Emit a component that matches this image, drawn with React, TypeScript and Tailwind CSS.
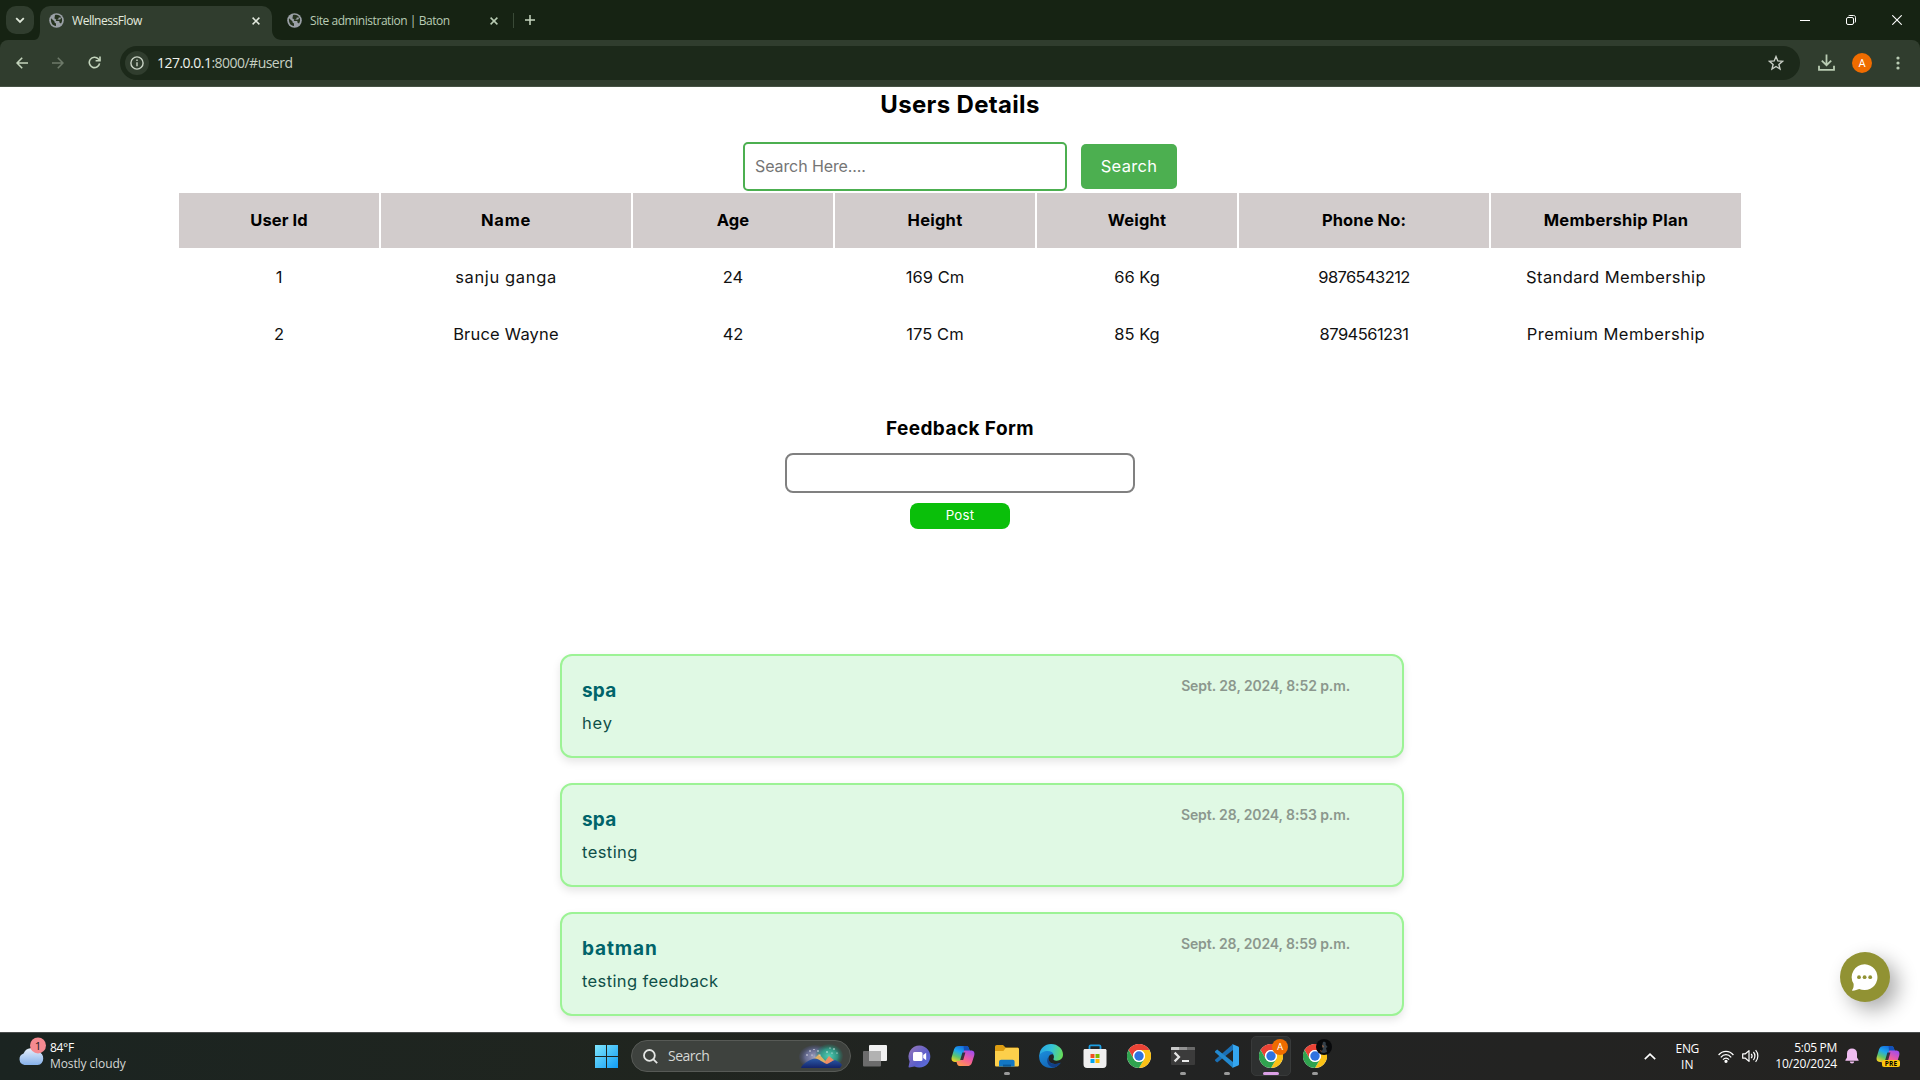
import React from "react";

type Cell = { text: string; cls: string };

const headers: Cell[] = [
  { text: "User Id", cls: "tracking-[0.1px]" },
  { text: "Name", cls: "tracking-[0.8px]" },
  { text: "Age", cls: "tracking-[0.1px]" },
  { text: "Height", cls: "tracking-[0.25px]" },
  { text: "Weight", cls: "tracking-[0.2px]" },
  { text: "Phone No:", cls: "tracking-[0.1px]" },
  { text: "Membership Plan", cls: "tracking-[0.28px]" },
];

const rows: Cell[][] = [
  [
    { text: "1", cls: "" },
    { text: "sanju ganga", cls: "tracking-[0.64px]" },
    { text: "24", cls: "" },
    { text: "169 Cm", cls: "tracking-[0.06px]" },
    { text: "66 Kg", cls: "" },
    { text: "9876543212", cls: "tracking-[-0.6px]" },
    { text: "Standard Membership", cls: "tracking-[0.38px]" },
  ],
  [
    { text: "2", cls: "" },
    { text: "Bruce Wayne", cls: "tracking-[0.2px]" },
    { text: "42", cls: "" },
    { text: "175 Cm", cls: "tracking-[0.06px]" },
    { text: "85 Kg", cls: "" },
    { text: "8794561231", cls: "tracking-[-0.54px]" },
    { text: "Premium Membership", cls: "tracking-[0.41px]" },
  ],
];

const posts = [
  { user: "spa", userCls: "tracking-[0.2px]", text: "hey", textCls: "tracking-[0.8px]", date: "Sept. 28, 2024, 8:52 p.m." },
  { user: "spa", userCls: "tracking-[0.2px]", text: "testing", textCls: "tracking-[0.43px]", date: "Sept. 28, 2024, 8:53 p.m." },
  { user: "batman", userCls: "tracking-[0.9px]", text: "testing feedback", textCls: "tracking-[0.38px]", date: "Sept. 28, 2024, 8:59 p.m." },
];

const GRID = "grid grid-cols-[200px_250px_200px_200px_200px_250px_250px] gap-x-[2px]";

function Globe() {
  return (
    <svg width="15" height="15" viewBox="0 0 15 15" className="shrink-0">
      <circle cx="7.5" cy="7.5" r="7.3" fill="#9aa0a6" />
      <path d="M2 5.2 L5.4 8.2 L5.6 9.6 L7 10.4 L7 13 C3.6 12.8 1.4 9.6 2 5.2 Z" fill="#26331f" />
      <path d="M6 2 C9 1.4 11.2 2.4 12.2 4.4 L9.8 4.6 L9.2 6.2 L6.6 6.4 L7.2 8 L10.2 8 L10.6 9.8 L12 10.6 C13.4 8.6 13.4 6.2 12.4 4.6 L11.2 6.4 L8.6 6.8 L5.4 5.6 Z" fill="#26331f" />
    </svg>
  );
}

function Cross({ color }: { color: string }) {
  return (
    <svg width="8" height="8" viewBox="0 0 8 8" className="shrink-0" fill="none" stroke={color} strokeWidth="1.5">
      <path d="M0.6 0.6 L7.4 7.4 M7.4 0.6 L0.6 7.4" />
    </svg>
  );
}

function TabStrip() {
  return (
    <div className="flex h-10 shrink-0 items-start bg-[#162313]">
      <div className="mt-[6px] ml-[6px] flex h-7 w-7 items-center justify-center rounded-[10px] bg-[#303d2e]">
        <svg width="10" height="7" viewBox="0 0 10 7" fill="none" stroke="#dfe8da" strokeWidth="1.8">
          <path d="M1.2 1.2 L5 5 L8.8 1.2" />
        </svg>
      </div>
      <svg width="6" height="10" viewBox="0 0 6 10" className="mt-[30px]">
        <path d="M6 0 V10 H0 C4 10 6 6 6 0 Z" fill="#303d2e" />
      </svg>
      <div className="mt-[6px] flex h-[34px] w-[232px] items-center rounded-t-[10px] bg-[#303d2e] pr-[12px] pb-[5px] pl-[9px]">
        <Globe />
        <span className="ml-[8px] flex-1 font-['Open_Sans',sans-serif] text-xs tracking-[-0.45px] text-[#e3eadf]">WellnessFlow</span>
        <Cross color="#e3eadf" />
      </div>
      <svg width="10" height="10" viewBox="0 0 10 10" className="mt-[30px]">
        <path d="M0 0 V10 H10 C4 10 0 6 0 0 Z" fill="#303d2e" />
      </svg>
      <div className="mt-[6px] flex h-[34px] w-[216px] items-center pb-[5px] pl-[5px]">
        <Globe />
        <span className="ml-[8px] flex-1 font-['Open_Sans',sans-serif] text-xs tracking-[-0.45px] text-[#b9ccb3]">Site administration | Baton</span>
        <Cross color="#b9ccb3" />
      </div>
      <div className="mt-[13px] ml-[15px] h-[15px] w-px bg-[#3a4a37]" />
      <svg width="10" height="10" viewBox="0 0 10 10" className="mt-[15px] ml-[11px]" stroke="#c6d6c0" strokeWidth="1.5">
        <path d="M5 0 V10 M0 5 H10" />
      </svg>
      <div className="mt-[15px] mr-[18px] ml-auto flex items-center gap-[36px]">
        <svg width="10" height="10" viewBox="0 0 10 10" stroke="#fff" strokeWidth="1"><path d="M0 5.5 H10" /></svg>
        <svg width="10" height="10" viewBox="0 0 10 10" fill="none" stroke="#fff" strokeWidth="1">
          <rect x="0.5" y="2.5" width="7" height="7" rx="1.5" />
          <path d="M2.5 0.9 C3 0.5 3.4 0.5 4 0.5 H7.5 C8.8 0.5 9.5 1.2 9.5 2.5 V6 C9.5 6.8 9.4 7.2 9 7.6" />
        </svg>
        <svg width="10" height="10" viewBox="0 0 10 10" stroke="#fff" strokeWidth="1.1"><path d="M0.3 0.3 L9.7 9.7 M9.7 0.3 L0.3 9.7" /></svg>
      </div>
    </div>
  );
}

function Toolbar() {
  return (
    <div className="shrink-0 bg-[#162313]">
      <div className="flex h-[47px] items-center rounded-t-[8px] border-b border-[#465244] bg-[#303d2e] pb-px">
        <svg width="12" height="12" viewBox="0 0 12 12" className="ml-[16px]" fill="none" stroke="#c3d4bc" strokeWidth="1.6">
          <path d="M12 6 H1.2 M6.2 0.7 L1 6 L6.2 11.3" />
        </svg>
        <svg width="12" height="12" viewBox="0 0 12 12" className="ml-[24px]" fill="none" stroke="#6d7a69" strokeWidth="1.6">
          <path d="M0 6 H10.8 M5.8 0.7 L11 6 L5.8 11.3" />
        </svg>
        <svg width="13" height="13" viewBox="0 0 13 13" className="ml-[24px]" fill="none" stroke="#c3d4bc" strokeWidth="1.6">
          <path d="M11.6 7.4 A5.2 5.2 0 1 1 10.4 3 L11.8 4.4" />
          <path d="M12 0.4 V4.8 H7.6" />
        </svg>
        <div className="ml-[19px] flex h-[34px] w-[1680px] items-center rounded-full bg-[#1c291a] pr-[16px] pl-[5px]">
          <div className="flex h-6 w-6 items-center justify-center rounded-full bg-[#303d2e]">
            <svg width="14" height="14" viewBox="0 0 14 14" fill="none" stroke="#c9d3c5" strokeWidth="1.4">
              <circle cx="7" cy="7" r="6.1" />
              <path d="M7 6.2 V10.2 M7 3.6 V5" />
            </svg>
          </div>
          <span className="ml-[8px] font-['Open_Sans',sans-serif] text-sm tracking-[-0.52px] text-[#c6d0c2]">
            <span className="text-[#eef3ec]">127.0.0.1</span>:8000/#userd
          </span>
          <svg width="16" height="16" viewBox="0 0 16 16" className="ml-auto" fill="none" stroke="#c9cfc6" strokeWidth="1.4">
            <path d="M8 1.6 L9.8 5.9 L14.5 6.3 L10.9 9.4 L12 14 L8 11.5 L4 14 L5.1 9.4 L1.5 6.3 L6.2 5.9 Z" />
          </svg>
        </div>
        <svg width="17" height="17" viewBox="0 0 17 17" className="ml-[17.5px]" fill="none" stroke="#b9ccb3" strokeWidth="1.8">
          <path d="M8.5 0.5 V11 M3.8 6.6 L8.5 11.2 L13.2 6.6 M1 11.8 V15.8 H16 V11.8" />
        </svg>
        <div className="ml-[17.5px] flex h-5 w-5 items-center justify-center rounded-full bg-[#ef6c00] pt-px font-[Roboto,sans-serif] text-[11px] leading-none text-white">A</div>
        <svg width="4" height="14" viewBox="0 0 4 14" className="ml-[24px]" fill="#b9ccb3">
          <circle cx="2" cy="2" r="1.6" />
          <circle cx="2" cy="7" r="1.6" />
          <circle cx="2" cy="12" r="1.6" />
        </svg>
      </div>
    </div>
  );
}

function Page() {
  return (
    <div className="relative flex flex-1 flex-col overflow-hidden bg-white text-black">
      <h1 className="mt-px text-center text-[24px] leading-[34px] font-bold tracking-[0.32px]">Users Details</h1>
      <div className="mt-[20px] flex h-[49px] items-center justify-center gap-[14px]">
        <div className="flex h-[49px] w-[324px] items-center rounded-[5px] border-2 border-[#4caf50] pb-[2px] pl-[10px] text-base tracking-[-0.1px] text-[#757575]">Search Here....</div>
        <button className="h-[45px] w-24 rounded-[5px] bg-[#4caf50] text-[16.5px] tracking-[0.3px] text-white">Search</button>
      </div>
      <div className="mx-auto mt-[2px] flex w-[1562px] flex-col gap-[2px] text-[16.5px]">
        <div className={GRID}>
          {headers.map((h) => (
            <div key={h.text} className="flex h-[55px] items-center justify-center bg-[#d2cccc] font-bold">
              <span className={h.cls}>{h.text}</span>
            </div>
          ))}
        </div>
        {rows.map((r, i) => (
          <div key={i} className={GRID}>
            {r.map((c) => (
              <div key={c.text} className="flex h-[55px] items-center justify-center text-[#111]">
                <span className={c.cls}>{c.text}</span>
              </div>
            ))}
          </div>
        ))}
      </div>
      <div className="mt-[52px] flex flex-col items-center">
        <h2 className="text-[19px] leading-[30px] font-bold tracking-[0.42px]">Feedback Form</h2>
        <div className="mt-[9px] h-10 w-[350px] rounded-[8px] border-2 border-[#808080]" />
        <button className="mt-[10px] flex h-[26px] w-[100px] items-center justify-center rounded-[8px] bg-[#0abf0a] text-[13.3px] tracking-[0.2px] text-white">Post</button>
      </div>
      <div className="mt-[125px] ml-[560px] flex w-[844px] flex-col gap-[25px]">
        {posts.map((p) => (
          <div key={p.date} className="flex h-[104px] shrink-0 items-start justify-between rounded-[12px] border-2 border-[#9cf395] bg-[#e0f9e4] pr-[52px] pl-[20px] shadow-[0_4px_8px_rgba(0,0,0,0.1)]">
            <div className="pt-[21px]">
              <div className={`text-[19px] leading-[28px] font-bold text-[#00646a] ${p.userCls}`}>{p.user}</div>
              <div className={`mt-[5px] text-[16.5px] leading-[26px] text-[#0f4f48] ${p.textCls}`}>{p.text}</div>
            </div>
            <div className="pt-[18px] text-[14px] leading-[24px] font-semibold tracking-[-0.11px] text-[#8b978d]">{p.date}</div>
          </div>
        ))}
      </div>
      <div className="absolute top-[865px] left-[1840px] flex h-[50px] w-[50px] items-center justify-center rounded-full bg-[#919233] shadow-[8px_8px_20px_rgba(0,0,0,0.33)]">
        <svg width="27" height="27" viewBox="0 0 27 27" className="-ml-px">
          <path d="M13.8 0.3 A13 12.9 0 1 1 8.2 25 C6.2 25.6 4.2 26.6 1.6 26.7 C0.9 26.7 0.9 26.2 1.3 25.8 C2.4 24.6 2.8 22.6 2.6 19.8 A13 12.9 0 0 1 13.8 0.3 Z" fill="#fff" />
          <g fill="#919233"><circle cx="8" cy="13.2" r="1.9" /><circle cx="13.6" cy="13.2" r="1.9" /><circle cx="19.2" cy="13.2" r="1.9" /></g>
        </svg>
      </div>
    </div>
  );
}

function Copilot({ id, size }: { id: string; size: number }) {
  return (
    <svg width={size} height={size} viewBox="0 0 24 24">
      <defs>
        <linearGradient id={id + "a"} x1="0.7" y1="0" x2="0.2" y2="1">
          <stop offset="0" stopColor="#1466dc" /><stop offset="0.4" stopColor="#1fa8ee" /><stop offset="0.7" stopColor="#5fc46b" /><stop offset="1" stopColor="#f4d321" />
        </linearGradient>
        <linearGradient id={id + "b"} x1="0.8" y1="0" x2="0.2" y2="1">
          <stop offset="0" stopColor="#a04cf0" /><stop offset="0.5" stopColor="#f25c9c" /><stop offset="1" stopColor="#ff9a4a" />
        </linearGradient>
      </defs>
      <path d="M8 2 H15.5 C17 2 17.6 3 18 4.4 L18.8 7 H16 C14.4 7 13.6 8 13.2 9.4 L10.8 18 H4 C1 18 0 15.6 0.8 12.8 L3 5.6 C3.8 3 5.4 2 8 2 Z" fill={`url(#${id}a)`} />
      <path d="M12.6 2 H15.5 C17 2 17.6 3 18 4.4 L18.8 7 H16 C14.4 7 13.6 8 13.2 9.4 Z" fill="#1350b8" />
      <path d="M16 22 H8.5 C7 22 6.4 21 6 19.6 L5.2 17 H8 C9.6 17 10.4 16 10.8 14.6 L13.2 6.4 H20 C23 6.4 24 8.6 23.2 11.4 L21 18.4 C20.2 21 18.6 22 16 22 Z" fill={`url(#${id}b)`} />
      <path d="M11.4 8.4 L14.4 8.4 L12.2 16 L9.2 16 Z" fill="#22252a" opacity="0.85" />
    </svg>
  );
}

function Chrome() {
  return (
    <svg width="24" height="24" viewBox="0 0 24 24">
      <circle cx="12" cy="12" r="12" fill="#fff" />
      <path d="M1.6 6 A12 12 0 0 1 22.4 6 H12 A6 6 0 0 0 6.8 15 Z" fill="#ea4335" />
      <path d="M22.4 6 A12 12 0 0 1 12 24 L17.2 15 A6 6 0 0 0 12 6 Z" fill="#fbc116" />
      <path d="M12 24 A12 12 0 0 1 1.6 6 L6.8 15 A6 6 0 0 0 17.2 15 Z" fill="#30a34f" />
      <circle cx="12" cy="12" r="6" fill="#fff" />
      <circle cx="12" cy="12" r="4.7" fill="#2f73e0" />
    </svg>
  );
}

function TaskItem({ children, mark = "none" }: { children: React.ReactNode; mark?: "none" | "idle" | "active" }) {
  return (
    <div
      className={
        mark === "active"
          ? "relative mx-[2px] flex h-10 w-10 items-center justify-center rounded-[5px] border border-[#383a3a] bg-[#2e3030]"
          : "relative mx-[2px] flex h-10 w-10 items-center justify-center"
      }
    >
      {children}
      {mark === "idle" && <span className="absolute bottom-[1px] left-[17px] h-[3px] w-[6px] rounded-full bg-[#9a9a9a]" />}
      {mark === "active" && <span className="absolute bottom-0 left-[11px] h-[3px] w-4 rounded-full bg-[#dba0e6]" />}
    </div>
  );
}

function Taskbar() {
  return (
    <div className="flex h-12 shrink-0 items-center border-t border-[#4a4d4d] bg-[linear-gradient(90deg,#1b2421_0%,#20251f_35%,#222323_60%,#242321_100%)] pb-px font-['Open_Sans',sans-serif] text-white">
      <div className="flex w-[595px] items-center">
        <svg width="34" height="34" viewBox="0 0 34 34" className="-mt-[4px] ml-[16px] shrink-0">
          <defs>
            <linearGradient id="cloud" x1="0" y1="0" x2="0" y2="1"><stop offset="0" stopColor="#e6effb" /><stop offset="1" stopColor="#86b1ea" /></linearGradient>
          </defs>
          <path d="M8.5 28 A6 6 0 0 1 7.6 16.4 A8 8 0 0 1 22 15 A6.6 6.6 0 0 1 21.5 28 Z" fill="url(#cloud)" />
          <circle cx="22" cy="8.4" r="8" fill="#f58a90" />
          <text x="22" y="12.6" fontSize="11.5" fill="#1a1a1a" textAnchor="middle" fontFamily="Open Sans, sans-serif">1</text>
        </svg>
        <div className="text-xs leading-4">
          <div className="tracking-[-0.3px]">84°F</div>
          <div className="tracking-[-0.1px] text-[#d5d7d5]">Mostly cloudy</div>
        </div>
      </div>
      <svg width="23" height="23" viewBox="0 0 23 23" className="shrink-0">
        <defs>
          <linearGradient id="win" x1="0" y1="0" x2="1" y2="1"><stop offset="0" stopColor="#7fe6fd" /><stop offset="1" stopColor="#109cf5" /></linearGradient>
        </defs>
        <path d="M0 0 H11 V11 H0 Z M12 0 H23 V11 H12 Z M0 12 H11 V23 H0 Z M12 12 H23 V23 H12 Z" fill="url(#win)" />
      </svg>
      <div className="ml-[13px] flex h-8 w-[220px] shrink-0 items-center rounded-full border border-[#575a56] bg-[#3e423e] pr-[7px] pl-[11px]">
        <svg width="15" height="15" viewBox="0 0 15 15" fill="none" stroke="#e4e6e4" strokeWidth="1.8">
          <circle cx="6.4" cy="6.4" r="5.4" />
          <path d="M10.2 10.2 L14.2 14.2" />
        </svg>
        <span className="ml-[10px] text-sm tracking-[-0.5px] text-[#d5d7d5]">Search</span>
        <svg width="44" height="24" viewBox="0 0 44 24" className="ml-auto">
          <defs>
            <radialGradient id="glowLeft"><stop offset="0" stopColor="#a3a4c4" /><stop offset="0.6" stopColor="#6d739f" stopOpacity="0.85" /><stop offset="1" stopColor="#4a5080" stopOpacity="0.15" /></radialGradient>
            <radialGradient id="glowRight"><stop offset="0" stopColor="#4fd0b4" /><stop offset="0.6" stopColor="#2f9c88" stopOpacity="0.9" /><stop offset="1" stopColor="#24705f" stopOpacity="0.15" /></radialGradient>
            <linearGradient id="hill" x1="0" y1="0" x2="0" y2="1"><stop offset="0" stopColor="#2b5aa8" /><stop offset="1" stopColor="#14246b" /></linearGradient>
          </defs>
          <ellipse cx="16" cy="13" rx="16" ry="12" fill="url(#glowLeft)" />
          <ellipse cx="30" cy="12" rx="14" ry="12" fill="url(#glowRight)" />
          <path d="M10 18 L17 13 L20 10 L28 19 Z" fill="#dfb064" />
          <path d="M24 20 L30 12 L36 17 L30 21 Z" fill="#ee8d65" />
          <path d="M2 24 C3 20 12 14.6 16 14.6 C20 15 24 19 28 20 C31 19 34 16 36 16 C39 17 42 19 43 21 L41 24 Z" fill="url(#hill)" />
          <g fill="#fff"><circle cx="8" cy="11" r="0.7" /><circle cx="11" cy="7" r="0.7" /><circle cx="15" cy="5.5" r="0.6" /><circle cx="19" cy="7" r="0.7" /><circle cx="21" cy="11" r="0.6" /><circle cx="28" cy="8" r="0.7" /><circle cx="31" cy="4" r="0.6" /><circle cx="35" cy="5" r="0.7" /><circle cx="38" cy="9" r="0.6" /><circle cx="33" cy="9" r="0.6" /><circle cx="13" cy="11" r="0.6" /></g>
        </svg>
      </div>
      <div className="ml-[2px] flex items-center">
        <TaskItem>
          <svg width="24" height="22" viewBox="0 0 24 22">
            <rect x="6" y="0" width="18" height="16" rx="1" fill="#f1f1f1" />
            <rect x="0" y="6" width="18" height="15.5" rx="1" fill="#6c6c6c" />
            <rect x="6" y="6" width="12" height="10" fill="#b2b2b2" />
          </svg>
        </TaskItem>
        <TaskItem>
          <svg width="23" height="23" viewBox="0 0 23 23">
            <defs><linearGradient id="chat" x1="0" y1="0" x2="1" y2="1"><stop offset="0" stopColor="#9a79b8" /><stop offset="0.6" stopColor="#5b5ecb" /><stop offset="1" stopColor="#5a74e0" /></linearGradient></defs>
            <path d="M11.5 0.5 A11 11 0 1 1 6.5 21.4 L1.2 22.4 C0.6 22.4 0.4 22 0.6 21.4 L1.6 16.4 A11 11 0 0 1 11.5 0.5 Z" fill="url(#chat)" />
            <rect x="5" y="7" width="9.5" height="9" rx="1.5" fill="#fff" />
            <path d="M15.2 10 L18.2 7.8 V15.2 L15.2 13 Z" fill="#fff" />
          </svg>
        </TaskItem>
        <TaskItem><Copilot id="c1" size={24} /></TaskItem>
        <TaskItem mark="idle">
          <svg width="24" height="22" viewBox="0 0 24 22">
            <path d="M0 2 C0 0.8 0.6 0 1.8 0 H8 L10.6 2.6 H22 C23.4 2.6 24 3.2 24 4.4 V10 H0 Z" fill="#dd9d12" />
            <path d="M0 6 H8.4 L10.6 3 H22.4 C23.4 3 24 3.6 24 4.6 V20 C24 21 23.4 21.6 22.4 21.6 H1.6 C0.6 21.6 0 21 0 20 Z" fill="#fccf4b" />
            <path d="M4 21.6 V17 C4 15.6 5 14.8 6.2 14.8 H17.6 C19 14.8 19.6 15.6 19.6 17 V21.6 Z" fill="#1277c4" />
            <path d="M8 21.6 V19.6 H16 V21.6 Z" fill="#0a5796" />
          </svg>
        </TaskItem>
        <TaskItem>
          <svg width="24" height="24" viewBox="0 0 24 24">
            <defs>
              <linearGradient id="edgeTop" x1="0" y1="0.3" x2="1" y2="0.5"><stop offset="0" stopColor="#27a5e4" /><stop offset="0.5" stopColor="#35c3d6" /><stop offset="1" stopColor="#66dd5a" /></linearGradient>
              <linearGradient id="edgeLow" x1="0" y1="0" x2="0.6" y2="1"><stop offset="0" stopColor="#1b8fdc" /><stop offset="1" stopColor="#1263b4" /></linearGradient>
            </defs>
            <path d="M0.4 11 C1 4 6 0 12 0 C19 0 24 5 24 10.6 C24 14.6 21 16.8 17.8 16.8 C15 16.8 13.8 15.8 14.6 14.6 C16 12 13.6 8 9 8 C4.6 8 1.6 10 0.4 13 Z" fill="url(#edgeTop)" />
            <path d="M0.2 12 C1.4 8.6 5 7 8.6 7 C12 7 14 8.6 14.6 10.4 C12.4 9.6 9.4 11 9.4 14.6 C9.4 19 14 21.6 21.4 19 C19.4 22 16 24 12 24 C5 24 -0.4 19 0.2 12 Z" fill="url(#edgeLow)" />
            <path d="M9.4 13 C8.6 18 13 22.4 22 18.4 C20.4 21 17.6 23 14.6 23.6 C9.6 22.8 6.4 18 9.4 13 Z" fill="#123f86" />
          </svg>
        </TaskItem>
        <TaskItem>
          <svg width="24" height="24" viewBox="0 0 24 24">
            <path d="M6.5 6 V2.6 C6.5 1.8 7 1.3 7.8 1.3 H16.2 C17 1.3 17.5 1.8 17.5 2.6 V6" fill="none" stroke="#1b9de2" strokeWidth="1.8" />
            <path d="M0.5 6.5 C0.5 5.6 1 5 2 5 H22 C23 5 23.5 5.6 23.5 6.5 V20 C23.5 22.6 22.4 24 20 24 H4 C1.6 24 0.5 22.6 0.5 20 Z" fill="#efefef" />
            <path d="M7.5 10 H11.5 V14 H7.5 Z" fill="#f25022" /><path d="M12.5 10 H16.5 V14 H12.5 Z" fill="#7fba00" />
            <path d="M7.5 15 H11.5 V19 H7.5 Z" fill="#00a4ef" /><path d="M12.5 15 H16.5 V19 H12.5 Z" fill="#ffb900" />
          </svg>
        </TaskItem>
        <TaskItem><Chrome /></TaskItem>
        <TaskItem mark="idle">
          <svg width="24" height="18" viewBox="0 0 24 18">
            <rect width="24" height="18" rx="1" fill="#3b3b3b" />
            <path d="M0 3 V1 C0 0.4 0.4 0 1 0 H8 V3 Z" fill="#c9c9c9" /><path d="M8 0 H16 V3 H8 Z" fill="#929292" /><path d="M16 0 H23 C23.6 0 24 0.4 24 1 V3 H16 Z" fill="#6a6a6a" />
            <path d="M3.6 5.6 L8 10 L3.6 14.4" fill="none" stroke="#e4e4e4" strokeWidth="2.2" />
            <path d="M11 14 H18" stroke="#fff" strokeWidth="1.8" />
          </svg>
        </TaskItem>
        <TaskItem mark="idle">
          <svg width="24" height="24" viewBox="0 0 24 24">
            <path d="M18 0 V6 L2.2 18.6 L0.3 17 C-0.1 16.6 -0.1 16 0.3 15.6 Z" fill="#1a6fb4" />
            <path d="M18 24 V18 L2.2 5.4 L0.3 7 C-0.1 7.4 -0.1 8 0.3 8.4 Z" fill="#2389cf" />
            <path d="M17.2 0 L23.2 2.6 C23.8 2.9 24 3.2 24 3.8 V20.2 C24 20.8 23.8 21.1 23.2 21.4 L17.2 24 C17.8 23.6 18 23.2 18 22.4 V1.6 C18 0.8 17.8 0.4 17.2 0 Z" fill="#34a6f0" />
          </svg>
        </TaskItem>
        <TaskItem mark="active">
          <Chrome />
          <span className="absolute top-[2px] left-[20px] flex h-4 w-4 items-center justify-center rounded-full bg-[#ef6c00] font-[Roboto,sans-serif] text-[9.5px] leading-none">A</span>
        </TaskItem>
        <TaskItem mark="idle">
          <Chrome />
          <svg width="16" height="16" viewBox="0 0 16 16" className="absolute top-[3px] left-[21px]">
            <circle cx="8" cy="8" r="8" fill="#08090b" />
            <path d="M7 3 C9 2 10.4 3.4 9.6 5.4 L11.6 8 L10 9 L11 13 L8 14 L5 13.6 L7 10 L6 7 Z" fill="#35404a" />
            <path d="M6 6 L8 7 L7 9 Z M4 11 L6 12 L5 13 Z" fill="#a5633c" />
          </svg>
        </TaskItem>
      </div>
      <div className="ml-auto flex items-center pr-[20px] text-xs">
        <svg width="12" height="7" viewBox="0 0 12 7" fill="none" stroke="#fff" strokeWidth="1.6"><path d="M0.8 6.2 L6 1.2 L11.2 6.2" /></svg>
        <div className="ml-[18px] w-[26px] pt-px text-center leading-4">
          <div className="tracking-[-0.35px]">ENG</div>
          <div>IN</div>
        </div>
        <svg width="16" height="13" viewBox="0 0 16 13" className="ml-[18px]" fill="none" stroke="#fff" strokeWidth="1.3">
          <path d="M0.6 5 C4.6 0.2 11.4 0.2 15.4 5" /><path d="M2.8 7.4 C5.8 3.8 10.2 3.8 13.2 7.4" /><path d="M5 9.6 C6.8 7.6 9.2 7.6 11 9.6" />
          <circle cx="8" cy="11.3" r="1" fill="#fff" />
        </svg>
        <svg width="17" height="14" viewBox="0 0 17 14" className="ml-[8px]" fill="none" stroke="#fff" strokeWidth="1.2">
          <path d="M0.7 4.8 H3.4 L7 1.6 V12.4 L3.4 9.2 H0.7 Z" strokeLinejoin="round" />
          <path d="M9.2 4.8 C10.2 6 10.2 8 9.2 9.2" /><path d="M11.4 3 C13.4 5.2 13.4 8.8 11.4 11" /><path d="M13.6 1.2 C16.6 4.4 16.6 9.6 13.6 12.8" />
        </svg>
        <div className="ml-[16px] text-right leading-4">
          <div className="tracking-[-0.3px]">5:05 PM</div>
          <div className="tracking-[-0.2px]">10/20/2024</div>
        </div>
        <svg width="14" height="16" viewBox="0 0 14 16" className="ml-[8px]" fill="#efbdf0">
          <path d="M7 0.4 A5 5 0 0 1 12 5.4 V9.4 L13.6 12 V12.8 H0.4 V12 L2 9.4 V5.4 A5 5 0 0 1 7 0.4 Z" />
          <path d="M4.8 13.6 H9.2 A2.2 2 0 0 1 4.8 13.6 Z" />
        </svg>
        <div className="relative ml-[17px] h-6 w-6">
          <Copilot id="c2" size={24} />
          <span className="absolute top-[16px] left-[6px] flex h-[7px] w-[18px] items-center justify-center rounded-[2px] bg-[#fcc60d] text-[6.5px] leading-[7px] font-bold tracking-[0.2px] text-black">PRE</span>
        </div>
      </div>
    </div>
  );
}

export default function App() {
  return (
    <div className="flex h-[1080px] w-[1920px] flex-col overflow-hidden bg-[#162313] font-[Inter,sans-serif]">
      <TabStrip />
      <Toolbar />
      <Page />
      <Taskbar />
    </div>
  );
}
